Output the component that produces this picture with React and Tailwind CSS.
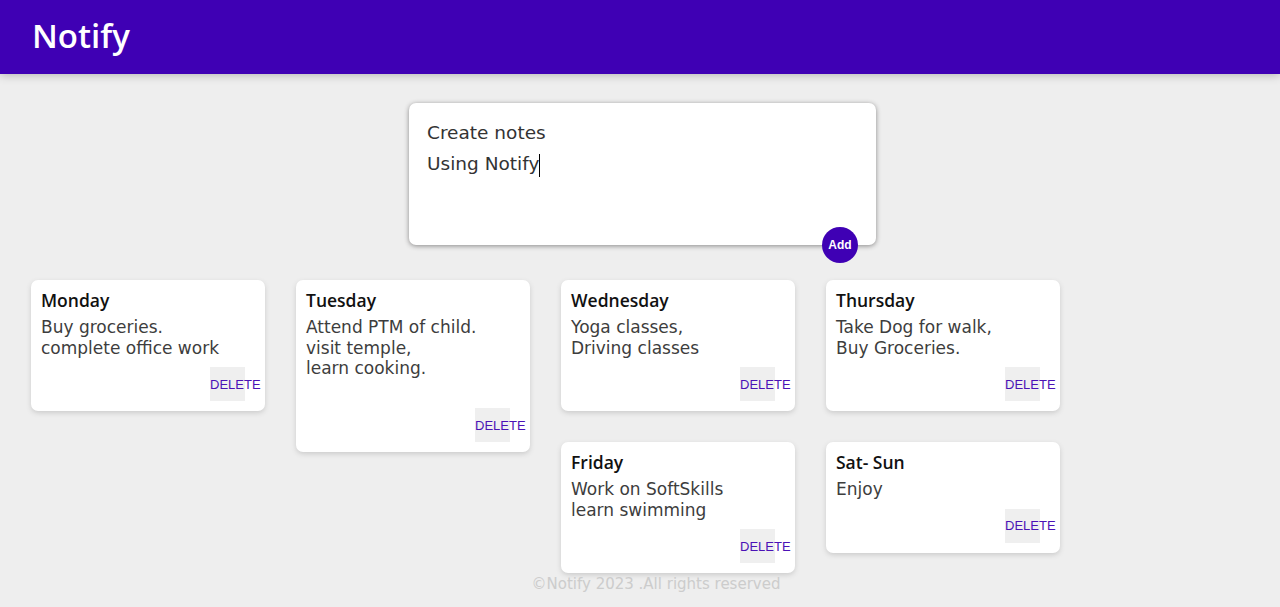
import React from 'react';

const notes = [
  { id: 1, title: 'Monday', content: 'Buy groceries.\ncomplete office work' },
  { id: 2, title: 'Tuesday', content: 'Attend PTM of child.\nvisit temple,\nlearn cooking.\n\u00a0' },
  { id: 3, title: 'Wednesday', content: 'Yoga classes,\nDriving classes' },
  { id: 4, title: 'Thursday', content: 'Take Dog for walk,\nBuy Groceries.' },
  { id: 5, title: 'Friday', content: 'Work on SoftSkills\nlearn swimming' },
  { id: 6, title: 'Sat- Sun', content: 'Enjoy' },
];

function Note({ title, content }) {
  return (
    <div className="float-left m-[15.5px] w-[234px] rounded-[7px] bg-white px-[10px] pt-[10px] pb-[10px] shadow-[0_2px_5px_#cccccc]">
      <h1 className="text-[17.5px] font-semibold leading-[20px] text-[#111] mb-[7px] font-['Open_Sans',sans-serif]">
        {title}
      </h1>
      <p className="whitespace-pre-wrap text-[17px] leading-[20.5px] text-[#3d3d3d] mb-[9px]">
        {content}
      </p>
      <div className="flex justify-end pr-[10px]">
        <button className="h-[34px] w-[35px] bg-[#efefef] flex items-center justify-start pt-[1px] overflow-visible whitespace-nowrap text-[13px] text-[#4b12b6] font-['Liberation_Sans',Arial,sans-serif]">
          DELETE
        </button>
      </div>
    </div>
  );
}

export default function App() {
  return (
    <div className="bg-[#eeeeee] font-['DejaVu_Sans',sans-serif]">
      <header className="h-[74px] bg-[#3f00b4] px-[32px] flex items-center shadow-[0_0_10px_rgba(0,0,0,0.3)]">
        <h1 className="text-[33px] font-semibold text-white font-['Open_Sans',sans-serif] leading-none pb-[4px]">
          Notify
        </h1>
      </header>

      <main className="flow-root px-[15.5px]">
        <form className="relative ml-[393.5px] mt-[29px] mb-[19.5px] h-[142px] w-[467px] rounded-[7px] bg-white px-[18px] pt-[14px] shadow-[0_1px_5px_rgb(138,137,137)]">
          <div className="text-[18.5px] leading-[31px] text-[#333]">Create notes</div>
          <div className="text-[18.5px] leading-[31px] text-[#333]">
            Using Notify
            <span className="inline-block w-[1px] h-[23px] bg-black align-middle" />
          </div>
          <button
            type="button"
            className="absolute right-[18px] bottom-[-18px] h-[36px] w-[36px] rounded-full bg-[#3f00b4] text-[12px] font-bold text-white font-['Liberation_Sans',Arial,sans-serif]"
          >
            Add
          </button>
        </form>

        {notes.map((n) => (
          <Note key={n.id} title={n.title} content={n.content} />
        ))}
      </main>

      <footer className="-mt-[20px] h-[39px] pl-[32px] pt-[5px] text-center">
        <p className="text-[15px] leading-[20px] text-[#cccccc]">©Notify 2023 .All rights reserved</p>
      </footer>
    </div>
  );
}
